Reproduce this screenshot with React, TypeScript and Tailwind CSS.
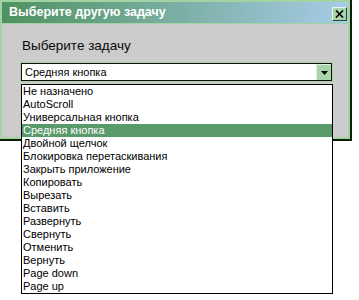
const items = [
  'Не назначено',
  'AutoScroll',
  'Универсальная кнопка',
  'Средняя кнопка',
  'Двойной щелчок',
  'Блокировка перетаскивания',
  'Закрыть приложение',
  'Копировать',
  'Вырезать',
  'Вставить',
  'Развернуть',
  'Свернуть',
  'Отменить',
  'Вернуть',
  'Page down',
  'Page up',
];

export default function App() {
  const selected = 'Средняя кнопка';
  return (
    <div className="relative h-[300px] w-[359px] bg-white font-['Liberation_Sans',sans-serif] text-black">
      {/* dialog window */}
      <div className="flex h-[141px] w-[352px] flex-col border-b-2 border-r-2 border-[#0c1f0c]">
        <div className="flex flex-1 flex-col border-2 border-[#a3d3a3] bg-[#cccccc]">
          <div className="flex h-[22px] items-center justify-between border-b border-[#a3d3a3] bg-gradient-to-r from-[#4f9160] to-[#a6cce8] pl-[7px] pr-[1px]">
            <span className="text-[12.5px] font-bold leading-none text-white">Выберите другую задачу</span>
            <button className="mt-[2px] flex h-[14px] w-[15px] items-center justify-center border border-b-[#2a4a2a] border-l-[#e8f5e8] border-r-[#2a4a2a] border-t-[#e8f5e8] bg-[#a9d3a9]">
              <svg width="9" height="8" viewBox="0 0 9 8">
                <path d="M1 0.5 L8 7.5 M8 0.5 L1 7.5" stroke="#000" strokeWidth="1.6" />
              </svg>
            </button>
          </div>
          <div className="flex flex-col pl-[18px] pt-[13px]">
            <p className="pl-[2px] text-[13.5px] leading-[18px] text-[#0a0a0a]">Выберите задачу</p>
            <div className="mt-[7px] flex h-[20px] w-[313px] border border-[#a3d3a3]">
              <div className="flex flex-1 items-center border border-[#111] bg-white">
                <span className="flex-1 pl-[3px] text-[11px] leading-none">{selected}</span>
                <div className="flex h-full w-[15px] items-center justify-center border-l border-t border-l-[#e0f0e0] border-t-[#e0f0e0] bg-[#a9d3a9]">
                  <svg width="7" height="4" viewBox="0 0 7 4">
                    <path d="M0 0 H7 L3.5 4 Z" fill="#000" />
                  </svg>
                </div>
              </div>
            </div>
          </div>
        </div>
      </div>

      {/* open dropdown list */}
      <ul className="absolute left-[21px] top-[84px] w-[312px] border border-black bg-white">
        {items.map((item) => (
          <li
            key={item}
            className={
              item === selected
                ? 'h-[13px] bg-[#5a9a6a] pl-[1px] text-[11px] leading-[13px] text-white'
                : 'h-[13px] pl-[1px] text-[11px] leading-[13px]'
            }
          >
            {item}
          </li>
        ))}
      </ul>
    </div>
  );
}
